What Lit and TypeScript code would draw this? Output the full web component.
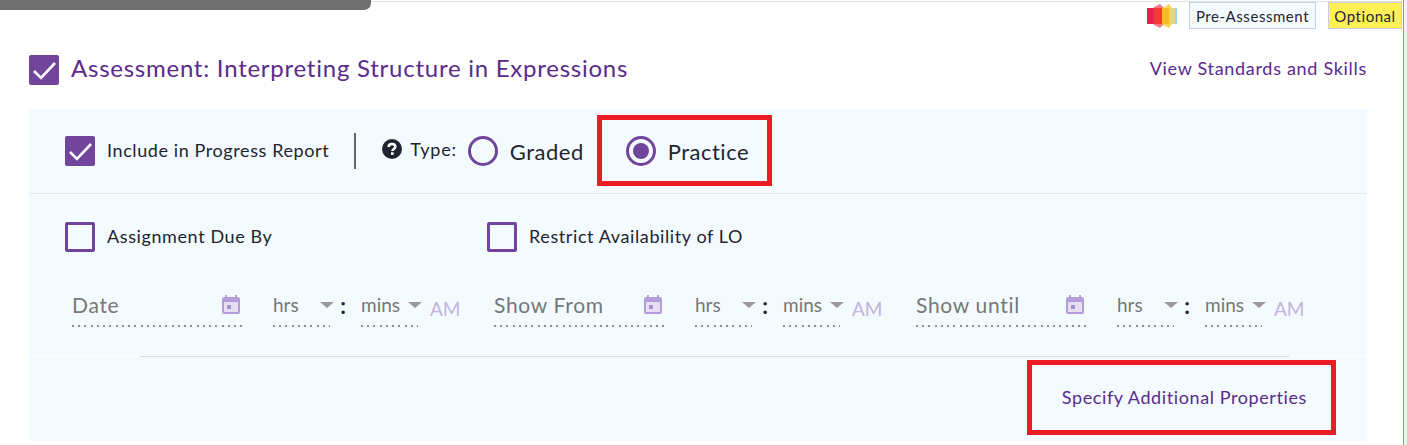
import { LitElement, html, css, svg } from 'lit';
import { customElement } from 'lit/decorators.js';

const calendarIcon = svg`
  <path fill="#b39ddb" d="M3 0h2v2h8V0h2v2h1c1 0 2 1 2 2v13c0 1-1 2-2 2H2c-1 0-2-1-2-2V4c0-1 1-2 2-2h1V0z"/>
  <rect x="2" y="7" width="14" height="10" fill="#e6dff2"/>
  <rect x="5" y="10" width="4" height="4" fill="#a78fd0"/>`;

@customElement('app-root')
export class AppRoot extends LitElement {
  static styles = css`
    :host {
      display: block;
      position: relative;
      width: 1407px;
      height: 445px;
      overflow: hidden;
      background: #fff;
      font-family: Lato, 'Noto Sans', sans-serif;
      color: #1f2430;
    }
    .top-strip {
      display: flex;
      height: 10px;
    }
    .top-tab {
      width: 371px;
      background: #6f6f6f;
      border-bottom-right-radius: 7px;
    }
    .top-line {
      flex: 1;
      height: 1px;
      margin-top: 1px;
      background: #e3e3e3;
    }
    .frame-edge {
      position: absolute;
      top: 0;
      bottom: 0;
      left: 1403px;
      right: 0;
      border-left: 1px solid #6fa3d6;
      background: #eef3f6;
    }
    .badges {
      display: flex;
      align-items: center;
      justify-content: flex-end;
      height: 27px;
      margin: -8px 5px 0 0;
      gap: 12px;
    }
    .logo {
      width: 30px;
      height: 26px;
    }
    .badge {
      box-sizing: border-box;
      height: 27px;
      display: flex;
      align-items: center;
      justify-content: center;
      border: 1px solid #c5d0e0;
      font-size: 15px;
      letter-spacing: 0.55px;
    }
    .badge.pre {
      width: 127px;
      background: #f3fbfe;
    }
    .badge.opt {
      width: 74px;
      background: #fff056;
    }
    .title-row {
      display: flex;
      align-items: center;
      justify-content: space-between;
      margin: 26px 40px 0 29px;
      height: 30px;
    }
    .title-left {
      display: flex;
      align-items: center;
      gap: 12px;
    }
    .title {
      font-size: 24px;
      letter-spacing: 0.75px;
      color: #5b2a8c;
      padding-bottom: 6px;
    }
    .link {
      font-size: 18px;
      letter-spacing: 0.7px;
      color: #5b2a8c;
      padding-bottom: 4px;
    }
    .link.props {
      letter-spacing: 0.6px;
    }
    .panel {
      margin: 24px 40px 0 29px;
      background: #f3fbfe;
      height: 332px;
    }
    .type-row {
      box-sizing: border-box;
      height: 85px;
      display: flex;
      align-items: center;
      padding-left: 36px;
      border-bottom: 1px solid #e4e8ea;
    }
    .check {
      box-sizing: border-box;
      flex: none;
      width: 30px;
      height: 30px;
      border-radius: 2px;
      background: #71459b;
    }
    .check svg {
      display: block;
    }
    .check.off {
      background: transparent;
      border: 3px solid #71459b;
    }
    .check-label {
      font-size: 18px;
      letter-spacing: 0.6px;
      margin-left: 12px;
      padding-bottom: 3px;
    }
    .divider {
      width: 2px;
      height: 36px;
      margin: 0 26px 0 25px;
      background: #666;
    }
    .help {
      width: 20px;
      height: 20px;
      margin: -4px 8px 0 0;
    }
    .type-label {
      font-size: 18px;
      letter-spacing: 0.8px;
      margin-top: -4px;
    }
    .radio {
      box-sizing: border-box;
      flex: none;
      width: 30px;
      height: 30px;
      border: 3px solid #71459b;
      border-radius: 50%;
      display: flex;
      align-items: center;
      justify-content: center;
    }
    .radio.on::after {
      content: '';
      width: 16px;
      height: 16px;
      border-radius: 50%;
      background: #71459b;
    }
    .radio-label {
      font-size: 22px;
      letter-spacing: 0.5px;
      margin-left: 12px;
    }
    .radio.first {
      margin-left: 11px;
    }
    .radio.second {
      margin-left: 42px;
    }
    .check-row {
      display: flex;
      align-items: center;
      padding: 28px 0 0 36px;
    }
    .check-item {
      display: flex;
      align-items: center;
      width: 422px;
    }
    .dates {
      display: flex;
      padding: 31px 0 0 43px;
      height: 104px;
      box-sizing: border-box;
    }
    .date-group {
      display: flex;
      width: 422px;
      flex: none;
    }
    .field {
      box-sizing: border-box;
      height: 44px;
      padding-bottom: 1px;
      background: repeating-linear-gradient(to right, #8f8f8f 0 2px, transparent 2px 6.23px) left bottom / 100% 2px no-repeat;
      display: flex;
      align-items: center;
      justify-content: space-between;
      color: #777;
    }
    .field.date {
      width: 170px;
      font-size: 21px;
      letter-spacing: 0.7px;
      padding-right: 2px;
      margin-right: 31px;
    }
    .field.time {
      width: 57px;
      font-size: 19px;
    }
    .arrow {
      width: 0;
      height: 0;
      margin-right: -4px;
      border-left: 7px solid transparent;
      border-right: 7px solid transparent;
      border-top: 6px solid #999;
    }
    .colon {
      box-sizing: border-box;
      width: 31px;
      padding-right: 5px;
      text-align: center;
      font-size: 22px;
      font-weight: 700;
      line-height: 46px;
    }
    .am {
      font-size: 19px;
      color: #c4b3de;
      margin: 14px 0 0 12px;
    }
    .rule {
      height: 1px;
      padding: 0 77px 0 111px;
      background: #fff;
    }
    .rule::before {
      content: '';
      display: block;
      height: 1px;
      background: #e0e0e0;
    }
    .more {
      display: flex;
      justify-content: flex-end;
      align-items: center;
      height: 84px;
      padding-right: 60px;
    }
    .mark {
      position: absolute;
      box-sizing: border-box;
      border: 5px solid #ed1c24;
    }
    .mark.practice {
      left: 597px;
      top: 115px;
      width: 175px;
      height: 71px;
    }
    .mark.props {
      left: 1027px;
      top: 360px;
      width: 309px;
      height: 75px;
    }
  `;

  private _check(on: boolean) {
    return html`<span class="check ${on ? '' : 'off'}">
      ${on
        ? html`<svg width="30" height="30" viewBox="0 0 30 30"><path d="M5 16l7 7L26 8" fill="none" stroke="#fff" stroke-width="2.6"/></svg>`
        : ''}
    </span>`;
  }

  private _dateGroup(label: string) {
    return html`<div class="date-group">
      <div class="field date">
        <span>${label}</span>
        <svg width="18" height="19" viewBox="0 0 18 19">${calendarIcon}</svg>
      </div>
      <div class="field time"><span>hrs</span><span class="arrow"></span></div>
      <span class="colon">:</span>
      <div class="field time"><span>mins</span><span class="arrow"></span></div>
      <span class="am">AM</span>
    </div>`;
  }

  render() {
    return html`
      <div class="top-strip">
        <div class="top-tab"></div>
        <div class="top-line"></div>
      </div>
      <div class="badges">
        <svg class="logo" viewBox="0 0 30 26">
          <path fill="#f47a80" d="M7 4l6-3 4 4v16l-4 4-6-3z" />
          <path fill="#f9d65c" d="M16 5l6-4 3 4v16l-3 4-6-3z" />
          <rect fill="#e8214f" y="5" width="7" height="16" />
          <rect fill="#f2383a" x="7" y="5" width="8" height="16" />
          <rect fill="#f7bd1c" x="15" y="5" width="7" height="16" />
          <rect fill="#e6d67c" x="22" y="5" width="6" height="16" />
          <rect fill="#9bd7ee" x="28" y="5" width="2" height="16" />
        </svg>
        <span class="badge pre">Pre-Assessment</span>
        <span class="badge opt">Optional</span>
      </div>
      <div class="title-row">
        <div class="title-left">
          ${this._check(true)}
          <span class="title">Assessment: Interpreting Structure in Expressions</span>
        </div>
        <span class="link">View Standards and Skills</span>
      </div>
      <div class="panel">
        <div class="type-row">
          ${this._check(true)}
          <span class="check-label">Include in Progress Report</span>
          <span class="divider"></span>
          <svg class="help" viewBox="0 0 24 24">
            <circle cx="12" cy="12" r="12" fill="#1f2430" />
            <path d="M8 9.500c0-2.200 1.700-3.500 4-3.500s4 1.300 4 3.300c0 2.800-3.500 2.700-3.500 5.200" fill="none" stroke="#fff" stroke-width="3" />
            <rect x="10.800" y="16" width="3.200" height="3" fill="#fff" />
          </svg>
          <span class="type-label">Type:</span>
          <span class="radio first"></span>
          <span class="radio-label">Graded</span>
          <span class="radio on second"></span>
          <span class="radio-label">Practice</span>
        </div>
        <div class="check-row">
          <div class="check-item">
            ${this._check(false)}
            <span class="check-label">Assignment Due By</span>
          </div>
          <div class="check-item">
            ${this._check(false)}
            <span class="check-label">Restrict Availability of LO</span>
          </div>
        </div>
        <div class="dates">
          ${this._dateGroup('Date')} ${this._dateGroup('Show From')} ${this._dateGroup('Show until')}
        </div>
        <div class="rule"></div>
        <div class="more"><span class="link props">Specify Additional Properties</span></div>
      </div>
      <div class="frame-edge"></div>
      <div class="mark practice"></div>
      <div class="mark props"></div>
    `;
  }
}
